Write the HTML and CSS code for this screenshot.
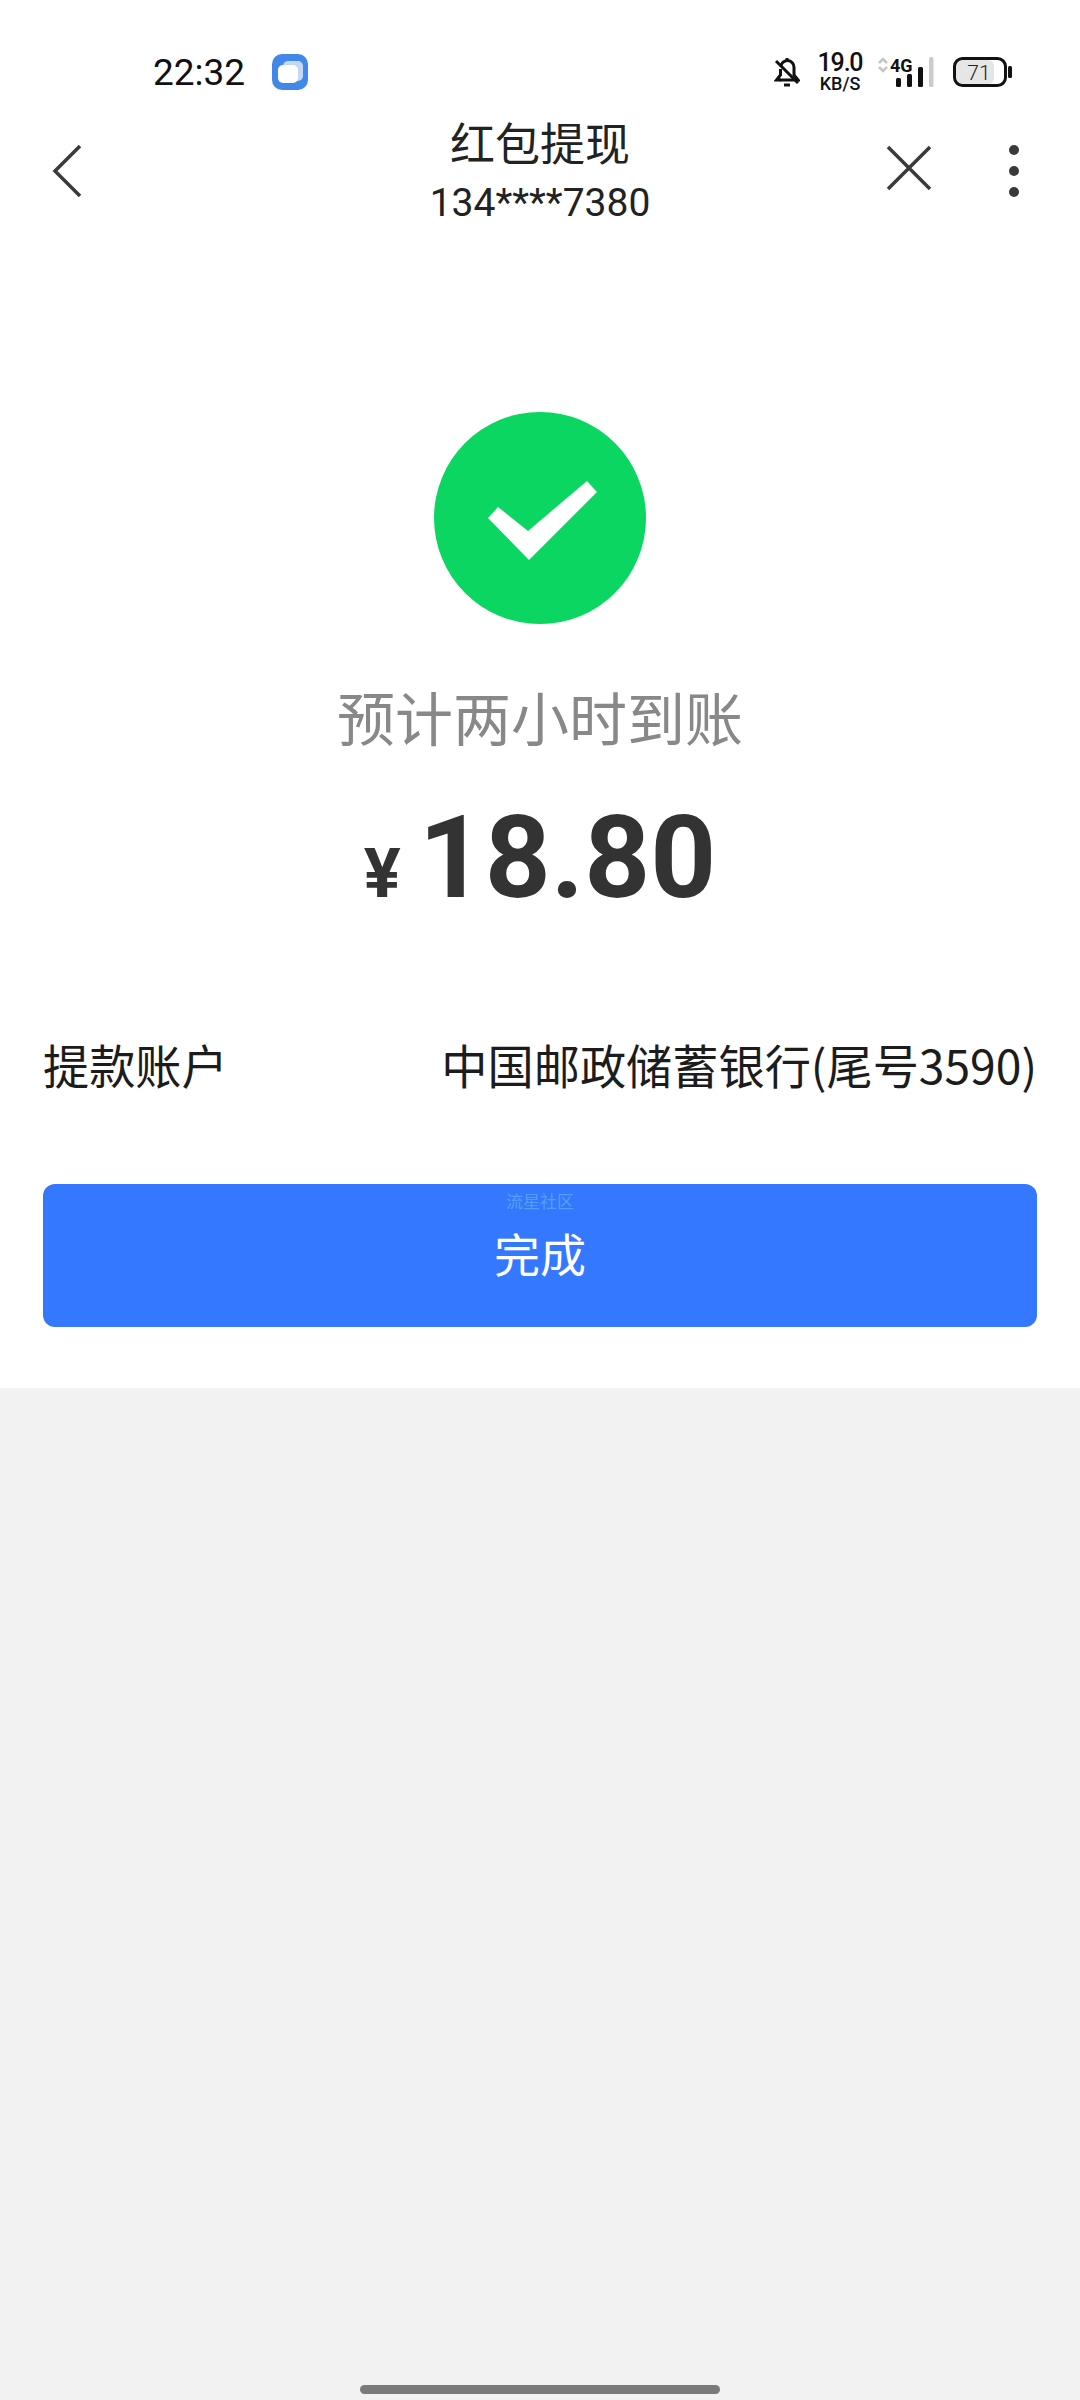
FILE: index.html
```html
<!DOCTYPE html>
<html lang="zh-CN">
<head>
<meta charset="utf-8"/>
<title>红包提现</title>
<link rel="stylesheet" href="styles.css">
</head>

<body>
<div class="Page">
  <div class="WhitePart">

    <!-- status bar -->
    <div class="StatusBar">
      <div class="StatusLeft">
        <span class="Time">22:32</span>
        <svg class="AppIcon" width="36" height="36" viewBox="0 0 36 36">
          <rect width="36" height="36" rx="10" fill="#4288e8"/>
          <rect x="11" y="7" width="20" height="20" rx="5" fill="#c3d8f7"/>
          <rect x="6" y="11" width="20" height="18" rx="5" fill="#ffffff"/>
        </svg>
      </div>
      <div class="StatusRight">
        <svg class="BellIcon" width="26" height="31" viewBox="0 0 26 31" fill="none" stroke="#111" stroke-width="3">
          <path d="M13 1v3"/>
          <path d="M7 9.500a6.500 6.500 0 0 1 11.500-3.500 7 7 0 0 1 1.500 4.500v7.500l4 5H6"/>
          <path d="M6.500 12v6l-4 5H7"/>
          <path d="M2 4l22 22"/>
          <path d="M10 28h6"/>
        </svg>
        <div class="Speed">
          <span class="SpeedNum">19.0</span>
          <span class="SpeedUnit">KB/S</span>
        </div>
        <svg class="NetIcon" width="56" height="36" viewBox="0 -6 56 36">
          <path d="M1 6l4-4 4 4M1 10l4 4 4-4" fill="none" stroke="#c4c4c4" stroke-width="2.500"/>
          <text class="NetText" x="12" y="14.500">4G</text>
          <rect x="18" y="21" width="5" height="9" rx="1.500" fill="#111"/>
          <rect x="29" y="17" width="5" height="13" rx="1.500" fill="#111"/>
          <rect x="40" y="10" width="5" height="20" rx="1.500" fill="#111"/>
          <rect x="51" y="0" width="4.500" height="30" rx="1.500" fill="#cccccc"/>
        </svg>
        <svg width="59" height="30" viewBox="0 0 59 30">
          <rect x="3" y="3" width="38" height="24" rx="6" fill="#e6e6e6"/>
          <rect x="1.500" y="1.500" width="51" height="27" rx="8" fill="none" stroke="#111" stroke-width="3"/>
          <rect x="55" y="9" width="4" height="12" rx="1.500" fill="#111"/>
          <text class="BattText" x="26" y="22.500">71</text>
        </svg>
      </div>
    </div>

    <!-- title bar -->
    <div class="TitleBar">
      <svg class="BackIcon" width="30" height="54" viewBox="0 0 30 54" fill="none" stroke="#3a3a3a" stroke-width="3.500">
        <path d="M28 2L3 27l25 25"/>
      </svg>
      <div class="TitleText">
        <div class="Title">红包提现</div>
        <div class="SubTitle">134****7380</div>
      </div>
      <div class="TitleActions">
        <svg class="CloseIcon" width="46" height="46" viewBox="0 0 46 46" fill="none" stroke="#3a3a3a" stroke-width="3.500">
          <path d="M2 2l42 42M44 2L2 44"/>
        </svg>
        <svg width="12" height="54" viewBox="0 0 12 54" fill="#3a3a3a">
          <circle cx="6" cy="6" r="5"/>
          <circle cx="6" cy="27" r="5"/>
          <circle cx="6" cy="48" r="5"/>
        </svg>
      </div>
    </div>

    <!-- result -->
    <div class="Result">
      <svg width="212" height="212" viewBox="0 0 212 212">
        <circle cx="106" cy="106" r="106" fill="#0ad661"/>
        <polygon points="54,106 64,95 94,119 153,69 163,80 95,148" fill="#ffffff"/>
      </svg>
      <div class="ResultText">预计两小时到账</div>
      <div class="Amount">
        <span class="Yen">¥</span>
        <span class="AmountNum">18.80</span>
      </div>
    </div>

    <div class="AccountRow">
      <span>提款账户</span>
      <span>中国邮政储蓄银行(尾号3590)</span>
    </div>

    <div class="DoneButton">
      <span class="Watermark">流星社区</span>
      <span>完成</span>
    </div>
  </div>

  <div class="GreyPart">
    <div class="HomeBar"></div>
  </div>
</div>
</body>
</html>
```

FILE: styles.css
```css
html, body {
  margin: 0;
  padding: 0;
}

body {
  font-family: "Noto Sans CJK SC", Roboto, sans-serif;
  background-color: #f2f2f2;
}

.Page {
  width: 1080px;
  height: 2400px;
  display: flex;
  flex-direction: column;
}

.WhitePart {
  height: 1388px;
  background-color: #ffffff;
}

/* status bar */
.StatusBar {
  height: 80px;
  padding-top: 32px;
  display: flex;
  justify-content: space-between;
  align-items: center;
}

.StatusLeft {
  padding-left: 153px;
  display: flex;
  align-items: center;
  gap: 27px;
}

.Time {
  font-family: Roboto, sans-serif;
  font-size: 37px;
  color: #111111;
}

.StatusRight {
  padding-right: 68px;
  display: flex;
  align-items: center;
  gap: 19px;
}

.BellIcon {
  margin-right: -2px;
}

.Speed {
  width: 46px;
  display: flex;
  flex-direction: column;
  align-items: center;
  font-family: Roboto, sans-serif;
  font-weight: 500;
  color: #111111;
}

.SpeedNum {
  font-size: 25px;
  line-height: 24px;
  letter-spacing: -1.200px;
}

.SpeedUnit {
  font-size: 18px;
  line-height: 18px;
}

.NetIcon {
  margin-top: -6px;
  margin-left: -4px;
}

.NetText {
  font-family: Roboto, sans-serif;
  font-size: 18px;
  font-weight: 700;
  fill: #111111;
}

.BattText {
  font-family: Roboto, sans-serif;
  font-size: 21px;
  font-weight: 300;
  fill: #222222;
  text-anchor: middle;
}

/* title bar */
.TitleBar {
  height: 118px;
  padding: 0 60px;
  display: grid;
  grid-template-columns: 1fr auto 1fr;
  align-items: center;
}

.BackIcon {
  margin-left: -8px;
}

.TitleText {
  text-align: center;
  color: #222222;
}

.Title {
  font-size: 45px;
  line-height: 58px;
}

.SubTitle {
  margin-top: 6px;
  font-family: Roboto, sans-serif;
  font-size: 39px;
  line-height: 52px;
}

.TitleActions {
  display: flex;
  align-items: center;
  justify-content: flex-end;
  gap: 76px;
}

.CloseIcon {
  margin-top: -6px;
}

/* result */
.Result {
  padding-top: 182px;
  display: flex;
  flex-direction: column;
  align-items: center;
}

.ResultText {
  margin-top: 52px;
  font-size: 58px;
  line-height: 80px;
  color: #888888;
}

.Amount {
  margin-top: 42px;
  display: flex;
  align-items: baseline;
  gap: 18px;
  font-family: Roboto, sans-serif;
  font-weight: 700;
  color: #333333;
  line-height: 120px;
}

.Yen {
  font-size: 69px;
}

.AmountNum {
  font-size: 115px;
}

.AccountRow {
  margin-top: 100px;
  padding: 0 43px;
  display: flex;
  justify-content: space-between;
  font-size: 46.200px;
  line-height: 60px;
  color: #1c1c1c;
}

.DoneButton {
  box-sizing: border-box;
  height: 143px;
  margin: 90px 43px 0;
  padding-bottom: 8px;
  border-radius: 12px;
  background-color: #3478ff;
  color: #ffffff;
  font-size: 46px;
  display: flex;
  align-items: center;
  justify-content: center;
  position: relative;
}

.Watermark {
  position: absolute;
  top: 5px;
  left: 0;
  right: 0;
  text-align: center;
  font-size: 17px;
  line-height: 24px;
  color: #52a0f5;
}

.GreyPart {
  flex: 1;
  display: flex;
  justify-content: center;
  align-items: flex-end;
  padding-bottom: 6px;
}

.HomeBar {
  width: 360px;
  height: 9px;
  border-radius: 5px;
  background-color: #7a7a7a;
}
```
